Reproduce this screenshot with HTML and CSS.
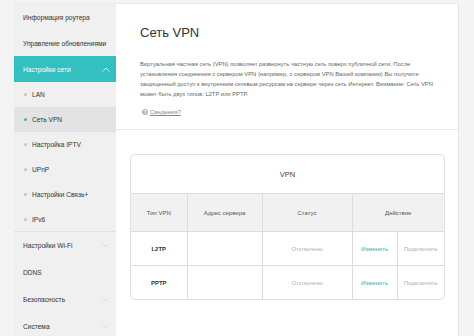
FILE: index.html
```html
<!DOCTYPE html>
<html lang="ru">
<head>
<meta charset="utf-8">
<link rel="stylesheet" href="styles.css">
</head>
<body>
<div class="page">
  <nav class="sidebar">
    <div class="item">Информация роутера</div>
    <div class="item">Управление обновлениями</div>
    <div class="item open">Настройки сети
      <svg class="chev" viewBox="0 0 8 5" width="8" height="5"><path d="M0.5 4.5 L4 1 L7.5 4.5" fill="none" stroke="#fff" stroke-width="0.8"/></svg>
    </div>
    <div class="sub"><span class="dot"></span>LAN</div>
    <div class="sub active"><span class="dot"></span>Сеть VPN</div>
    <div class="sub"><span class="dot"></span>Настройка IPTV</div>
    <div class="sub"><span class="dot"></span>UPnP</div>
    <div class="sub"><span class="dot"></span>Настройки Связь+</div>
    <div class="sub last"><span class="dot"></span>IPv6</div>
    <div class="item tall">Настройки Wi-Fi
      <svg class="chev" viewBox="0 0 8 5" width="8" height="5"><path d="M0.5 0.5 L4 4 L7.5 0.5" fill="none" stroke="#d6d6d6" stroke-width="0.8"/></svg>
    </div>
    <div class="item tall">DDNS</div>
    <div class="item tall">Безопасность
      <svg class="chev" viewBox="0 0 8 5" width="8" height="5"><path d="M0.5 0.5 L4 4 L7.5 0.5" fill="none" stroke="#d6d6d6" stroke-width="0.8"/></svg>
    </div>
    <div class="item tall">Система
      <svg class="chev" viewBox="0 0 8 5" width="8" height="5"><path d="M0.5 0.5 L4 4 L7.5 0.5" fill="none" stroke="#d6d6d6" stroke-width="0.8"/></svg>
    </div>
  </nav>
  <main class="main">
    <section class="intro">
      <h1 class="title">Сеть VPN</h1>
      <p class="desc">Виртуальная частная сеть (VPN) позволяет развернуть частную сеть поверх публичной сети. После<br>установления соединения с сервером VPN (например, с сервером VPN Вашей компании) Вы получите<br>защищенный доступ к внутренним сетевым ресурсам на сервере через сеть Интернет. Внимание: Сеть VPN<br>может быть двух типов: L2TP или PPTP.</p>
      <div class="help"><span class="q">?</span><a class="link">Сведения?</a></div>
    </section>
    <section class="tablewrap">
      <div class="card">
        <div class="card-title">VPN</div>
        <table class="vpn">
          <colgroup>
            <col class="c1"><col class="c2"><col class="c3"><col class="c4"><col class="c5">
          </colgroup>
          <tr class="head">
            <th>Тип VPN</th><th>Адрес сервера</th><th>Статус</th><th colspan="2">Действие</th>
          </tr>
          <tr class="row">
            <td class="type">L2TP</td><td></td><td class="muted">Отключено</td><td class="edit">Изменить</td><td class="muted">Подключить</td>
          </tr>
          <tr class="row">
            <td class="type">PPTP</td><td></td><td class="muted">Отключено</td><td class="edit">Изменить</td><td class="muted">Подключить</td>
          </tr>
        </table>
      </div>
    </section>
  </main>
</div>
</body>
</html>
```
FILE: styles.css
```css
html, body {
  margin: 0;
  padding: 0;
}
body {
  background: #f4f4f4;
  font-family: "Liberation Sans", Arial, sans-serif;
  color: #333;
  overflow: hidden;
}
.page {
  display: flex;
  padding: 3px 0 0 14px;
  height: 336px;
  box-sizing: border-box;
  overflow: hidden;
}
.sidebar {
  width: 102px;
  flex: none;
  background: #f0f0f0;
  border-top: 1px solid #ebebeb;
}
.item {
  height: 26px;
  display: flex;
  align-items: center;
  justify-content: space-between;
  padding: 0 6px 0 9px;
  font-size: 6.6px;
  color: #333;
  white-space: nowrap;
}
.item.tall {
  height: 27px;
}
.item.open {
  background: #33c0c0;
  color: #fff;
}
.chev {
  display: block;
}
.sub {
  height: 25px;
  display: flex;
  align-items: center;
  padding-left: 10px;
  font-size: 6.6px;
  color: #333;
}
.sub.active {
  background: #e3e3e3;
}
.sub.last {
  border-bottom: 1px solid #e2e2e2;
  height: 24px;
}
.dot {
  width: 3px;
  height: 3px;
  border-radius: 50%;
  background: #c4c4c4;
  margin-right: 5px;
}
.sub.active .dot {
  background: #2fbaba;
}
.main {
  width: 342px;
  flex: none;
  background: #fff;
  border-right: 1px solid #e3e3e3;
  border-top: 1px solid #ebebeb;
}
.intro {
  padding: 20px 10px 0 24px;
  height: 126px;
  box-sizing: border-box;
  border-bottom: 1px solid #e8e8e8;
}
.title {
  margin: 0;
  font-size: 13px;
  font-weight: normal;
  color: #333;
  line-height: 18px;
}
.desc {
  margin: 17px 0 0;
  font-size: 5.8px;
  line-height: 10px;
  color: #666;
  white-space: nowrap;
}
.help {
  display: flex;
  align-items: center;
  margin-top: 10px;
  padding-left: 2px;
}
.q {
  width: 6px;
  height: 6px;
  border-radius: 50%;
  background: #b5b5b5;
  color: #fff;
  font-size: 5px;
  line-height: 6px;
  text-align: center;
  font-weight: bold;
  margin-right: 2px;
}
.link {
  font-size: 6px;
  color: #888;
  text-decoration: underline;
}
.tablewrap {
  padding: 24px 0 0 14px;
}
.card {
  width: 315px;
  box-sizing: border-box;
  border: 1px solid #e0e0e0;
  border-radius: 5px;
  overflow: hidden;
}
.card-title {
  height: 38px;
  display: flex;
  align-items: center;
  justify-content: center;
  font-size: 7.5px;
  color: #444;
}
.vpn {
  width: 100%;
  border-collapse: collapse;
  table-layout: fixed;
}
.c1 { width: 56px; }
.c2 { width: 75px; }
.c3 { width: 90px; }
.c4 { width: 45px; }
.c5 { width: 47px; }
.vpn th, .vpn td {
  border: 1px solid #dcdcdc;
  text-align: center;
  padding: 0;
  font-size: 6px;
  white-space: nowrap;
}
.vpn tr > :first-child { border-left: none; }
.vpn tr > :last-child { border-right: none; }
.vpn tr:last-child td { border-bottom: none; }
.head th {
  height: 37px;
  background: #f1f1f1;
  font-weight: normal;
  color: #555;
}
.row td {
  height: 33px;
}
.type {
  color: #333;
  font-weight: bold;
  font-size: 6.2px;
}
.muted {
  color: #b0b0b0;
}
.edit {
  color: #34b2b2;
}
```
